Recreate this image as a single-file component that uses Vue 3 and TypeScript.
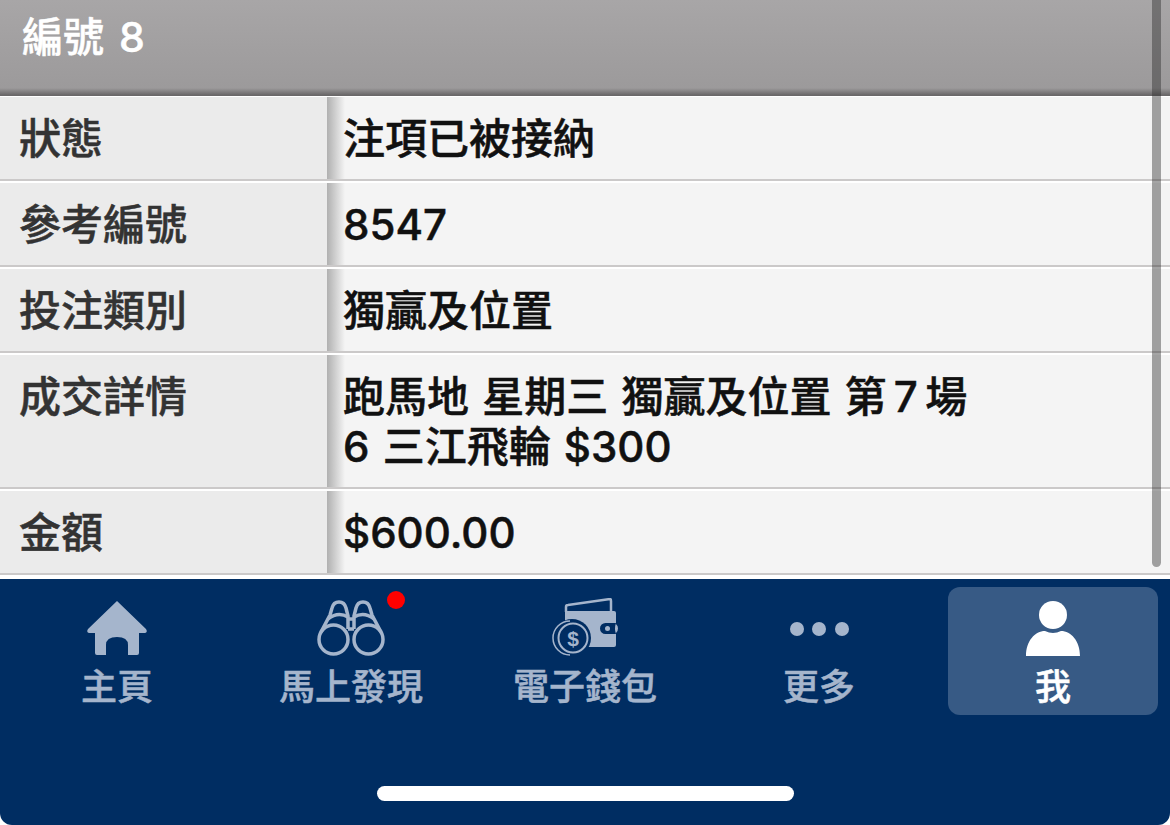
<template>
  <div class="screen">
    <header class="title">編號 8</header>
    <div class="rows">
      <div v-for="row in rows" :key="row.label" class="row">
        <div class="label">{{ row.label }}</div>
        <div class="value">
          <div v-for="line in row.lines" :key="line">{{ line }}</div>
        </div>
      </div>
      <div class="scrollbar"></div>
    </div>
    <nav class="tabs">
      <div class="tab">
        <svg class="icon" viewBox="0 0 80 60">
          <path d="M40 3 L69 31 Q71 34 68 35 L62 35 L62 55 Q62 57 60 57 L51 57 L51 47 Q51 39 40 39 Q29 39 29 47 L29 57 L20 57 Q18 57 18 55 L18 35 L12 35 Q9 34 11 31 Z" fill="#a5b5cc" />
        </svg>
        <span>主頁</span>
      </div>
      <div class="tab">
        <svg class="icon" viewBox="0 0 80 60" fill="none" stroke="#a5b5cc" stroke-width="3.500">
          <circle cx="22.500" cy="41.500" r="14.500" />
          <circle cx="57.500" cy="41.500" r="14.500" />
          <path d="M10 34 L19 17 L21 10 Q22.500 4 28 4 Q33.500 4 35 10 L37 18 V31" />
          <path d="M70 34 L61 17 L59 10 Q57.500 4 52 4 Q46.500 4 45 10 L43 18 V31" />
          <path d="M17 21 Q27 13 37 19 M63 21 Q53 13 43 19" />
          <path d="M37 21 H43 M37 31 H43" />
        </svg>
        <span>馬上發現</span>
        <i class="dot"></i>
      </div>
      <div class="tab">
        <svg class="icon" viewBox="0 0 80 60">
          <path d="M21 14 V9 Q21 7 23 7 L65 1 Q66 1 66 3 V14" fill="none" stroke="#a5b5cc" stroke-width="2.500" />
          <path d="M20 13 H69 Q71 13 71 15 V47 Q71 49 69 49 H28 L20 30 Z" fill="#a5b5cc" />
          <rect x="55" y="25" width="18" height="11" rx="5.500" fill="#a5b5cc" />
          <path d="M71 25 H60.500 A5.500 5.500 0 0 0 60.500 36 H71 Q69 30.500 71 25 Z" fill="#002d62" />
          <circle cx="62.500" cy="30.500" r="2.500" fill="#a5b5cc" />
          <circle cx="27" cy="40" r="19" fill="#002d62" />
          <path d="M25 23 A17 17 0 0 0 25 57" fill="none" stroke="#a5b5cc" stroke-width="1.500" />
          <circle cx="28" cy="40" r="14.500" fill="#002d62" stroke="#a5b5cc" stroke-width="2" />
          <text x="28" y="47.500" text-anchor="middle" class="coin">$</text>
        </svg>
        <span>電子錢包</span>
      </div>
      <div class="tab">
        <svg class="icon" viewBox="0 0 80 60" fill="#a5b5cc">
          <circle cx="18" cy="31" r="7" />
          <circle cx="40" cy="31" r="7" />
          <circle cx="63" cy="31" r="7" />
        </svg>
        <span>更多</span>
      </div>
      <div class="tab active">
        <svg class="icon" viewBox="0 0 80 60" fill="#fff">
          <circle cx="40" cy="17" r="14" />
          <path d="M13 58 C13 43 22 33 32 33 Q40 37 48 33 C58 33 67 43 67 58 Z" />
        </svg>
        <span>我</span>
      </div>
    </nav>
    <div class="home-bar"></div>
  </div>
</template>

<script setup lang="ts">
interface Row {
  label: string;
  lines: string[];
}

const rows: Row[] = [
  { label: '狀態', lines: ['注項已被接納'] },
  { label: '參考編號', lines: ['8547'] },
  { label: '投注類別', lines: ['獨贏及位置'] },
  { label: '成交詳情', lines: ['跑馬地 星期三 獨贏及位置 第\u20097\u2009場', '6 三江飛輪 $300'] },
  { label: '金額', lines: ['$600.00'] }
];
</script>

<style scoped>
.screen {
  position: relative;
  width: 1170px;
  height: 825px;
  overflow: hidden;
  background: #fff;
  font-family: Inter, "Noto Sans CJK TC", sans-serif;
  font-weight: 500;
  -webkit-text-stroke: 0.5px currentColor;
}

.title {
  height: 96px;
  margin-bottom: 1px;
  box-sizing: border-box;
  padding: 12px 0 0 22px;
  font-size: 41px;
  line-height: 50px;
  word-spacing: 4px;
  color: #fff;
  background: linear-gradient(to bottom, #a8a6a7 0, #9c9a9b 88px, #6a6869 95px);
}

.rows {
  position: relative;
  height: 482px;
}

.row {
  display: flex;
  margin-bottom: 2px;
  border-bottom: 2px solid #cbc9c9;
  font-size: 42px;
  line-height: 50px;
  word-spacing: 2px;
}

.label {
  width: 327px;
  box-sizing: border-box;
  padding: 17px 0 15px 19px;
  color: #333;
  background: #ebebeb;
}

.value {
  flex: 1;
  padding: 17px 0 15px 16px;
  color: #111;
  background: linear-gradient(to right, #b0b0b0 0, #f4f4f4 18px);
}

.scrollbar {
  position: absolute;
  top: -97px;
  right: 9px;
  width: 9px;
  height: 567px;
  border-radius: 0 0 5px 5px;
  background: rgba(40, 40, 40, 0.42);
}

.tabs {
  display: grid;
  grid-template-columns: repeat(5, 234px);
  height: 246px;
  box-sizing: border-box;
  padding-top: 8px;
  border-radius: 0 0 12px 12px;
  background: #002d62;
}

.tab {
  position: relative;
  display: flex;
  flex-direction: column;
  align-items: center;
  height: 128px;
  box-sizing: border-box;
  padding-top: 11px;
  font-size: 36px;
  line-height: 50px;
  color: #a5b5cc;
}

.tab.active {
  width: 210px;
  justify-self: end;
  margin-right: 12px;
  border-radius: 12px;
  color: #fff;
  background: #375a85;
}

.icon {
  width: 80px;
  height: 60px;
  margin-bottom: 4px;
}

.coin {
  font-family: "Liberation Sans", sans-serif;
  font-size: 21px;
  font-weight: 700;
  fill: #a5b5cc;
  -webkit-text-stroke: 0;
}

.dot {
  position: absolute;
  top: 4px;
  left: 153px;
  width: 18px;
  height: 18px;
  border-radius: 50%;
  background: #ff0000;
}

.home-bar {
  position: absolute;
  left: 377px;
  bottom: 24px;
  width: 417px;
  height: 15px;
  border-radius: 8px;
  background: #fff;
}
</style>
